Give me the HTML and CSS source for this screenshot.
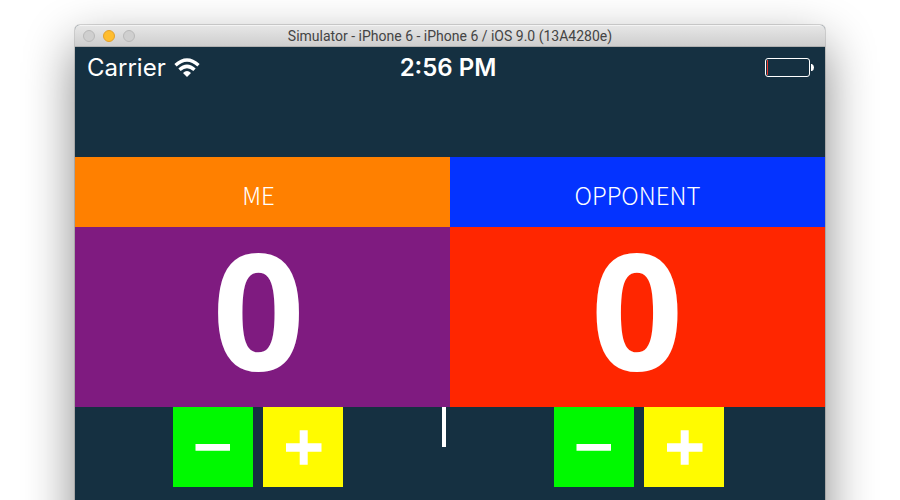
FILE: index.html
```html
<!DOCTYPE html>
<html lang="en">
<head>
<meta charset="utf-8">
<title>Simulator</title>
<link rel="stylesheet" href="styles.css">
</head>
<body>
<main class="window">
  <header class="titlebar">
    <div class="lights">
      <button class="light" type="button" aria-label="Close"></button>
      <button class="light light-minimize" type="button" aria-label="Minimize"></button>
      <button class="light" type="button" aria-label="Zoom"></button>
    </div>
    <h1 class="title">Simulator - iPhone 6 - iPhone 6 / iOS 9.0 (13A4280e)</h1>
  </header>
  <div class="statusbar">
    <div class="carrier">
      <span>Carrier</span>
      <svg class="wifi" width="26" height="20" viewBox="0 0 26 20" aria-hidden="true">
        <g fill="none" stroke="#fff" stroke-width="3.4">
          <path d="M1.500 7.200Q13-3.200 24.500 7.200"/>
          <path d="M5.500 11.800Q13 5 20.500 11.800"/>
        </g>
        <path fill="#fff" d="M9 15Q13 11 17 15L13 19Z"/>
      </svg>
    </div>
    <time class="clock">2:56 PM</time>
    <svg class="battery" width="50" height="20" viewBox="0 0 50 20" aria-hidden="true">
      <rect x="0.500" y="0.500" width="44" height="18" rx="2.500" fill="none" stroke="#fff"/>
      <path d="M2.500 2V17" stroke="#e8382f"/>
      <path fill="#fff" d="M46 6h1q2 1 2 3.500t-2 3.500h-1z"/>
    </svg>
  </div>
  <div class="board">
    <section class="player player-me">
      <h2 class="name">ME</h2>
      <div class="score">0</div>
      <div class="controls">
        <div class="buttons">
          <button class="step step-minus" type="button" aria-label="Decrease my score"><svg width="40" height="40" viewBox="0 0 40 40"><path fill="#fff" d="M2.500 17h34.500v6.700H2.500z"/></svg></button>
          <button class="step step-plus" type="button" aria-label="Increase my score"><svg width="40" height="40" viewBox="0 0 40 40"><path fill="#fff" d="M16.700 3.300h8v13h13.800v8.500H24.700v13h-8v-13H3v-8.500h13.700z"/></svg></button>
        </div>
        <div class="divider"></div>
      </div>
    </section>
    <section class="player player-opponent">
      <h2 class="name">OPPONENT</h2>
      <div class="score">0</div>
      <div class="controls">
        <div class="buttons">
          <button class="step step-minus" type="button" aria-label="Decrease opponent score"><svg width="40" height="40" viewBox="0 0 40 40"><path fill="#fff" d="M2.500 17h34.500v6.700H2.500z"/></svg></button>
          <button class="step step-plus" type="button" aria-label="Increase opponent score"><svg width="40" height="40" viewBox="0 0 40 40"><path fill="#fff" d="M16.700 3.300h8v13h13.800v8.500H24.700v13h-8v-13H3v-8.500h13.700z"/></svg></button>
        </div>
      </div>
    </section>
  </div>
</main>
</body>
</html>
```
FILE: styles.css
```css
* {
  box-sizing: border-box;
}

body {
  margin: 0;
  padding: 25px 75px 0;
  height: 100vh;
  overflow: hidden;
  background: #fff;
}

.window {
  min-height: calc(100vh + 75px);
  border-radius: 5px 5px 0 0;
  background: #153041;
  box-shadow: 0 0 0 1px rgba(0, 0, 0, 0.14), 0 20px 50px rgba(0, 0, 0, 0.48);
  color: #fff;
}

.titlebar {
  display: grid;
  grid-template-columns: 1fr auto 1fr;
  align-items: center;
  height: 22px;
  padding: 0 8px;
  border-top: 1px solid #f4f4f4;
  border-bottom: 1px solid #b0b0b0;
  border-radius: 5px 5px 0 0;
  background: linear-gradient(#e6e6e6, #cecece);
}

.lights {
  display: flex;
  gap: 8px;
}

.light {
  width: 12px;
  height: 12px;
  padding: 0;
  border: 1px solid #b9b9b9;
  border-radius: 50%;
  background: #cfcfcf;
}

.light-minimize {
  border-color: #e2a02c;
  background: #ffbd2e;
}

.title {
  margin: 0;
  font: 400 14px/20px Roboto, Arial, sans-serif;
  color: #444;
}

.statusbar {
  display: grid;
  grid-template-columns: 1fr auto 1fr;
  align-items: center;
  height: 42px;
  padding: 0 10px 0 12px;
  font: 400 24px/42px Inter, sans-serif;
}

.carrier {
  display: flex;
  align-items: center;
  gap: 8px;
}

.clock {
  padding-right: 6px;
  font-weight: 600;
}

.battery {
  justify-self: end;
}

.board {
  display: grid;
  grid-template-columns: 1fr 1fr;
  margin-top: 68px;
}

.name {
  height: 70px;
  margin: 0;
  padding-top: 18px;
  font: 300 24px/40px "Noto Sans CJK SC", sans-serif;
  text-align: center;
}

.score {
  height: 180px;
  font: 700 162px/160px "Open Sans", sans-serif;
  text-align: center;
}

.player-me .name,
.player-me .score {
  padding-right: 8px;
}

.player-me .name {
  background: #ff8000;
}

.player-me .score {
  background: #7f1b80;
}

.player-opponent .name {
  background: #0433ff;
}

.player-opponent .score {
  padding-right: 1px;
  background: #ff2600;
}

.controls {
  display: flex;
}

.buttons {
  display: flex;
  flex: 1;
  justify-content: center;
  gap: 10px;
}

.player-me .buttons {
  padding-right: 1px;
}

.player-opponent .buttons {
  padding-left: 3px;
}

.step {
  display: grid;
  place-items: center;
  width: 80px;
  height: 80px;
  padding: 0;
  border: 0;
}

.step-minus {
  background: #00f900;
}

.step-plus {
  background: #fffb00;
}

.divider {
  width: 4px;
  height: 40px;
  margin-right: 4px;
  background: #fff;
}
```
